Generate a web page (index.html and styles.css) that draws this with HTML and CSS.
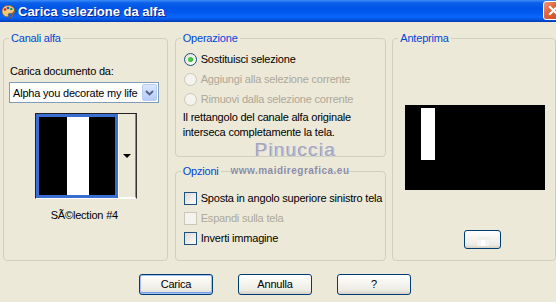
FILE: index.html
```html
<!DOCTYPE html>
<html lang="it">
<head>
<meta charset="utf-8">
<title>Carica selezione da alfa</title>
<link rel="stylesheet" href="styles.css">
</head>
<body>
<div class="window">
  <div class="titlebar">
    <svg class="app-icon" width="15" height="15" viewBox="0 0 15 15">
      <path d="M7 1.5C3.5 1.5 1 4 1 7.2c0 3 2.3 5.6 5.2 5.6 1.3 0 1.5-.9 1.1-1.7-.5-.9.1-1.8 1.2-1.7 2.5.3 5-.6 5-3.2C13.5 3.5 10.6 1.5 7 1.5z" fill="#f3c98b" stroke="#8a5a2b" stroke-width="0.8"/>
      <circle cx="4" cy="5.5" r="1.3" fill="#e02020"/>
      <circle cx="7" cy="4" r="1.3" fill="#2050e0"/>
      <circle cx="10.2" cy="5" r="1.3" fill="#20a030"/>
      <circle cx="3.8" cy="9" r="1.3" fill="#f0d020"/>
      <path d="M9 14l4.5-7.5 1 .6L10 14.5z" fill="#c08040" stroke="#6a3a10" stroke-width="0.5"/>
    </svg>
    <span class="title">Carica selezione da alfa</span>
    <div class="close"><svg width="11" height="11" viewBox="0 0 11 11"><path d="M2 2l7 7M9 2l-7 7" stroke="#fff" stroke-width="2.2" stroke-linecap="square"/></svg></div>
  </div>

  <div class="content">
    <div class="panels">
      <fieldset class="group g-left">
        <legend>Canali alfa</legend>
        <div class="label">Carica documento da:</div>
        <div class="select">
          <span class="select-text">Alpha you decorate my life</span>
          <span class="select-btn"><svg width="9" height="6" viewBox="0 0 9 6"><path d="M1 1l3.5 3.5L8 1" fill="none" stroke="#4d6185" stroke-width="1.8"/></svg></span>
        </div>
        <div class="thumb">
          <div class="thumb-img"><div class="band"></div></div>
          <div class="thumb-drop"><span class="tri"></span></div>
        </div>
        <div class="caption">SÃ©lection #4</div>
      </fieldset>

      <div class="midcol">
        <fieldset class="group g-op">
          <legend>Operazione</legend>
          <div class="opt-row"><span class="radio checked"></span><span>Sostituisci selezione</span></div>
          <div class="opt-row disabled"><span class="radio"></span><span>Aggiungi alla selezione corrente</span></div>
          <div class="opt-row disabled"><span class="radio"></span><span>Rimuovi dalla selezione corrente</span></div>
          <p class="desc">Il rettangolo del canale alfa originale<br>interseca completamente la tela.</p>
        </fieldset>
        <fieldset class="group g-opt">
          <legend>Opzioni</legend>
          <div class="opt-row"><span class="check"></span><span>Sposta in angolo superiore sinistro tela</span></div>
          <div class="opt-row disabled"><span class="check"></span><span>Espandi sulla tela</span></div>
          <div class="opt-row"><span class="check"></span><span>Inverti immagine</span></div>
        </fieldset>
      </div>

      <fieldset class="group g-prev">
        <legend>Anteprima</legend>
        <div class="preview"><div class="pbar"></div></div>
        <div class="btn small-btn"><span class="checker"></span></div>
      </fieldset>
    </div>

    <div class="buttons">
      <div class="btn default">Carica</div>
      <div class="btn">Annulla</div>
      <div class="btn">?</div>
    </div>
  </div>

  <div class="watermark">
    <div class="wm-name">Pinuccia</div>
    <div class="wm-url">www.maidiregrafica.eu</div>
  </div>
</div>
</body>
</html>
```

FILE: styles.css
```css
html, body {
  margin: 0;
  padding: 0;
  overflow: hidden;
  background: #ece9d8;
}

.window {
  position: relative;
  width: 556px;
  height: 302px;
  background: #ece9d8;
  font-family: "Liberation Sans", Arial, sans-serif;
  font-size: 11px;
  color: #000;
  letter-spacing: -0.2px;
}

.titlebar {
  height: 22px;
  display: flex;
  align-items: center;
  background: linear-gradient(#3d8df5 0, #0a5fea 3px, #0055e5 8px, #0058ee 12px, #0a66fb 17px, #0552dc 20px, #0035b0 22px);
}

.app-icon {
  margin-left: 1px;
  flex: none;
}

.title {
  margin-left: 2px;
  color: #fff;
  font-weight: bold;
  font-size: 13px;
  letter-spacing: 0;
  text-shadow: 1px 1px 0 #0a1e8a;
  flex: 1;
}

.close {
  flex: none;
  width: 21px;
  height: 19px;
  margin-right: -8px;
  box-sizing: border-box;
  border: 1px solid #fff;
  border-radius: 3px;
  background: linear-gradient(135deg, #f09a78 0, #e0653c 40%, #c8461e 100%);
  display: flex;
  align-items: center;
  justify-content: center;
  align-self: flex-start;
  margin-top: 1px;
}

.content {
  display: flex;
  flex-direction: column;
}

.panels {
  display: flex;
  margin-top: 9px;
  padding-left: 3px;
}

.group {
  margin: 0;
  padding: 0;
  min-width: 0;
  border: 1px solid #d0d0bf;
  border-radius: 4px;
  box-sizing: border-box;
}

.group legend {
  margin-left: 5px;
  padding: 0 2px;
  line-height: 14px;
  color: #0046d5;
  font-size: 11px;
}

.g-left {
  width: 165px;
  height: 230px;
}

.label {
  margin: 20px 0 0 6px;
  line-height: 13px;
}

.select {
  margin: 4px 0 0 5px;
  width: 150px;
  height: 21px;
  box-sizing: border-box;
  border: 1px solid #7f9db9;
  background: #fff;
  display: flex;
  align-items: center;
  justify-content: space-between;
}

.select-text {
  padding-left: 3px;
  white-space: nowrap;
}

.select-btn {
  width: 15px;
  height: 17px;
  margin-right: 1px;
  box-sizing: border-box;
  border: 1px solid #b9cdf6;
  border-radius: 2px;
  background: linear-gradient(#dae6fe, #b7cbf8);
  display: flex;
  align-items: center;
  justify-content: center;
}

.thumb {
  margin: 10px 0 0 31px;
  width: 102px;
  height: 86px;
  box-sizing: border-box;
  border: 1px solid #222;
  border-right-color: #333;
  border-bottom-color: #fff;
  display: flex;
  background: #ece9d8;
}

.thumb-img {
  width: 82px;
  height: 84px;
  box-sizing: border-box;
  border: 3px solid #3a6ed0;
  background: #000;
  position: relative;
  display: flex;
  justify-content: center;
}

.band {
  width: 22px;
  height: 100%;
  margin-left: 2px;
  background: #fff;
}

.thumb-drop {
  flex: 1;
  border-left: 1px solid #fff;
  border-bottom: 1px solid #fff;
  border-right: 1px solid #888;
  display: flex;
  align-items: center;
  justify-content: center;
}

.tri {
  width: 0;
  height: 0;
  border-left: 4px solid transparent;
  border-right: 4px solid transparent;
  border-top: 4px solid #000;
}

.caption {
  margin-top: 10px;
  text-align: center;
  line-height: 13px;
  padding-right: 2px;
}

.midcol {
  margin-left: 7px;
  width: 212px;
  display: flex;
  flex-direction: column;
}

.g-op {
  height: 126px;
  padding-top: 4px;
}

.g-opt {
  height: 97px;
  margin-top: 7px;
  padding-top: 10px;
}

.opt-row {
  height: 20px;
  display: flex;
  align-items: center;
  padding-left: 8px;
  white-space: nowrap;
}

.opt-row.disabled {
  color: #aca899;
}

.radio {
  width: 13px;
  height: 13px;
  box-sizing: border-box;
  border-radius: 50%;
  border: 1px solid #1c5180;
  background: radial-gradient(circle at 65% 65%, #fff 0, #e9e7df 70%, #d6d3c7 100%);
  margin-right: 4px;
  flex: none;
  display: flex;
  align-items: center;
  justify-content: center;
}

.radio.checked::after {
  content: "";
  width: 5px;
  height: 5px;
  border-radius: 50%;
  background: radial-gradient(circle at 40% 40%, #55d355, #21a121);
}

.disabled .radio {
  border-color: #cac8bb;
  background: #f4f3ee;
}

.check {
  width: 13px;
  height: 13px;
  box-sizing: border-box;
  border: 1px solid #1c5180;
  background: linear-gradient(135deg, #dcdbd4 0, #f0efea 60%, #fff 100%);
  margin-right: 4px;
  flex: none;
}

.disabled .check {
  border-color: #cac8bb;
  background: #f4f3ee;
}

.desc {
  margin: 1px 0 0 7px;
  line-height: 15px;
}

.g-prev {
  margin-left: 6px;
  width: 164px;
  height: 230px;
}

.preview {
  margin: 60px 0 0 12px;
  width: 140px;
  height: 85px;
  background: #000;
  position: relative;
  display: flex;
  padding: 3px 0 0 16px;
  box-sizing: border-box;
}

.pbar {
  width: 14px;
  height: 52px;
  background: #fff;
}

.btn {
  width: 74px;
  height: 21px;
  box-sizing: border-box;
  border: 1px solid #003c74;
  border-radius: 3px;
  background: linear-gradient(#ffffff 0, #f6f5f0 40%, #ecebe4 80%, #d6d0c5 100%);
  display: flex;
  align-items: center;
  justify-content: center;
  line-height: 13px;
}

.btn.default {
  box-shadow: inset 0 0 0 1px #a4bff0, inset 0 -1px 0 1px #7aa0e8;
}

.small-btn {
  width: 37px;
  height: 19px;
  margin: 40px 0 0 71px;
  align-items: flex-end;
  padding-bottom: 2px;
}

.checker {
  width: 12px;
  height: 6px;
  background:
    linear-gradient(90deg, #f4f4f4 0 4px, #fff 4px 8px, #f4f4f4 8px 12px);
  box-shadow: 0 -3px 0 0 #f0f0ea;
}

.buttons {
  display: flex;
  gap: 25px;
  margin: 13px 0 0 139px;
}

.watermark {
  position: absolute;
  left: 220px;
  top: 140px;
  width: 140px;
  text-align: center;
  pointer-events: none;
}

.wm-name {
  font-family: "Liberation Sans", sans-serif;
  font-size: 19px;
  line-height: 20px;
  letter-spacing: 1.2px;
  padding-left: 10px;
  color: #a3a3ba;
  text-shadow: 0 0 1px #fff, 1px 0 0 #b8b8cc;
}

.wm-url {
  margin-top: 5px;
  font-family: "Liberation Sans", sans-serif;
  font-size: 10px;
  line-height: 12px;
  letter-spacing: 0.5px;
  color: #8a8aa0;
  font-weight: bold;
  text-shadow: 0 0 1px #fff;
}
```
